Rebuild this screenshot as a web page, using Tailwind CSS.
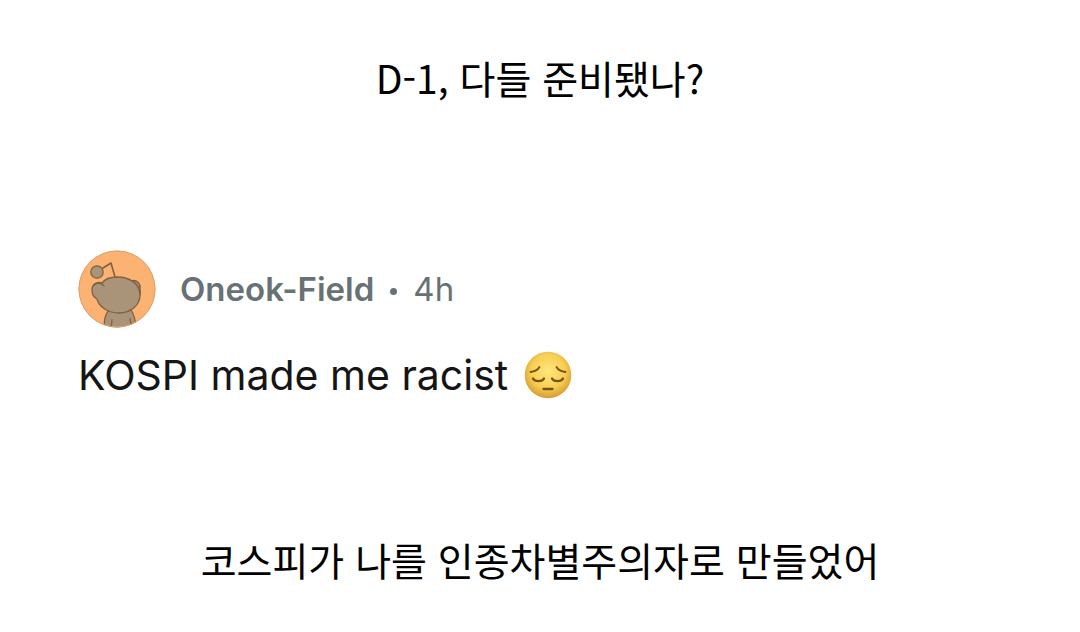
<!DOCTYPE html>
<html lang="ko">
<head>
    <meta charset="UTF-8">
    <meta name="viewport" content="width=device-width, initial-scale=1.0">
    <title>KOSPI made me racist</title>
    <script src="https://cdn.jsdelivr.net/npm/@tailwindcss/browser@4"></script>
</head>
<body class="bg-white text-black">
    <main class="flex min-h-screen flex-col font-['Noto_Sans_CJK_KR',sans-serif]">
        <h1 class="pt-[47px] text-center text-[39px] leading-[60px]">D-1, 다들 준비됐나?</h1>

        <article class="my-auto px-[78px] pt-4 font-[Inter,sans-serif]">
            <header class="flex items-center gap-6 text-[33px] leading-10 text-[#687274]">
                <svg class="size-[78px] shrink-0" viewBox="0 0 78 78" aria-hidden="true">
                    <defs>
                        <clipPath id="avatarClip"><circle cx="39" cy="39" r="38.5"/></clipPath>
                    </defs>
                    <circle cx="39" cy="39" r="38.5" fill="#fbb272"/>
                    <g clip-path="url(#avatarClip)" stroke="#80603f" stroke-width="1.3" stroke-linecap="round" stroke-linejoin="round">
                        <path d="M30 61C26 67 26 75 27 80H57C58 73 57 66 53 60Z" fill="#a99479"/>
                        <path d="M34 70L33 79M52 69L54 79" fill="none"/>
                        <path d="M53 31C59 29 63 34 62 39C63 43 62 46 60 48Z" fill="#a58c6d"/>
                        <path d="M24 33C18 31 14 35 14 40C14 45 17 48 19 49C21 57 30 63 41 63C53 63 62 55 62 45C62 34 52 27 39 27C33 27 27 29 24 33Z" fill="#a99479"/>
                        <path d="M16 35C20 32 24 33 26 36" fill="none"/>
                        <path d="M25 18L33 13L37 27" fill="none" stroke-width="1.6"/>
                        <circle cx="19" cy="22" r="6.2" fill="#a99479"/>
                    </g>
                    <circle cx="39" cy="39" r="38" fill="none" stroke="#dfa16b"/>
                </svg>
                <div class="flex items-center gap-4">
                    <a href="#" class="font-semibold">Oneok-Field</a>
                    <span class="mt-1 size-[7px] rounded-full bg-[#687274]"></span>
                    <time>4h</time>
                </div>
            </header>
            <p class="mt-5 flex items-center gap-4 text-[41px] leading-[54px] text-[#151515]">
                KOSPI made me racist
                <svg class="size-12 shrink-0" viewBox="0 0 48 48" role="img" aria-label="pensive face">
                    <defs>
                        <radialGradient id="faceFill" cx="50%" cy="42%" r="60%">
                            <stop offset="0" stop-color="#ffe67c"/>
                            <stop offset="0.6" stop-color="#f8cf54"/>
                            <stop offset="1" stop-color="#d3962f"/>
                        </radialGradient>
                    </defs>
                    <circle cx="24" cy="24" r="23.3" fill="url(#faceFill)"/>
                    <g fill="none" stroke="#765014" stroke-linecap="round">
                        <path d="M6.5 21C11 20.5 14 18.5 15.5 16M41.5 21C37 20.5 34 18.5 32.5 16" stroke-width="1.8"/>
                        <path d="M9 27.5C11 31 18 31 20 27.5M28 27.5C30 31 37 31 39 27.5" stroke-width="2.3"/>
                        <path d="M19.5 38H28.5" stroke-width="2.3"/>
                    </g>
                </svg>
            </p>
        </article>

        <p class="pb-[43px] text-center text-[39px] leading-[60px]">코스피가 나를 인종차별주의자로 만들었어</p>
    </main>
</body>
</html>
